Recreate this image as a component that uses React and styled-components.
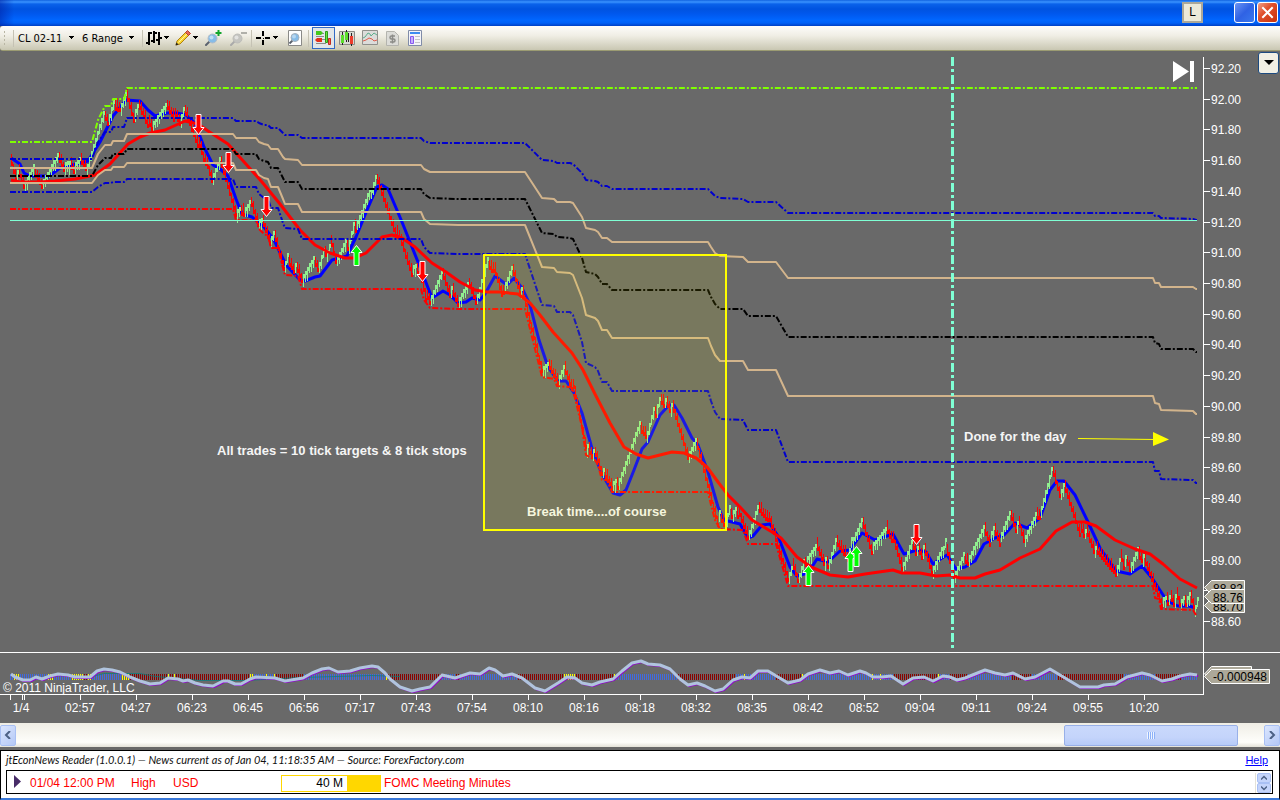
import styled, { createGlobalStyle } from "styled-components";

const GlobalStyle = createGlobalStyle`
  * {
    box-sizing: border-box;
  }

  body {
    margin: 0;
    background: #696969;
    font-family: "Liberation Sans", Arial, sans-serif;
    font-size: 12px;
  }

  button,
  input,
  select {
    margin: 0;
    padding: 0;
    border: 0;
    font-family: inherit;
    font-size: inherit;
    color: inherit;
  }
`;

/* ---------- chart data ---------- */

const BAR_STEP = 2;
const HALF_BAR = 5;

// swing highs and lows of the price, alternating, starting with a high
const swings = [
  [11, 156], [15, 182], [19, 168], [24, 192], [33, 164], [42, 191], [58, 151],
  [63, 172], [71, 160], [73, 174], [81, 155], [87, 174], [104, 108], [108, 128],
  [113, 100], [121, 113], [126, 89], [133, 123], [139, 100], [147, 128],
  [149, 117], [152, 133], [167, 100], [173, 122], [175, 108], [180, 128],
  [184, 103], [197, 148], [199, 138], [204, 165], [206, 156], [212, 186],
  [220, 154], [236, 220], [240, 206], [245, 217], [251, 197], [258, 230],
  [263, 217], [270, 248], [274, 228], [284, 275], [287, 253], [294, 276],
  [296, 260], [302, 286], [314, 254], [318, 275], [324, 245], [327, 260],
  [331, 237], [336, 268], [346, 237], [348, 255], [353, 222], [356, 233],
  [369, 188], [371, 199], [376, 171], [395, 238], [399, 230], [411, 277],
  [416, 263], [417, 275], [419, 263], [425, 302], [427, 290], [430, 307],
  [442, 267], [449, 298], [452, 285], [458, 309], [469, 278], [476, 308],
  [487, 257], [491, 273], [494, 263], [501, 297], [502, 285], [504, 295],
  [512, 263], [520, 298], [522, 285], [542, 377], [549, 360], [558, 387],
  [564, 362], [571, 391], [573, 379], [586, 454], [588, 443], [592, 460],
  [595, 447], [602, 479], [604, 467], [612, 492], [616, 478], [618, 491],
  [639, 421], [647, 441], [653, 407], [656, 418], [660, 393], [664, 410],
  [666, 395], [670, 415], [672, 400], [688, 463], [696, 436], [717, 527],
  [719, 510], [725, 530], [729, 505], [732, 521], [735, 507], [737, 519],
  [739, 507], [748, 543], [758, 502], [765, 521], [769, 512], [788, 585],
  [793, 560], [798, 586], [804, 555], [806, 568], [817, 541], [824, 568],
  [826, 555], [828, 572], [836, 535], [848, 563], [851, 537], [853, 547],
  [862, 516], [871, 555], [887, 524], [891, 543], [893, 533], [902, 575],
  [912, 537], [916, 559], [918, 543], [921, 560], [924, 543], [932, 578],
  [941, 547], [943, 556], [945, 538], [954, 583], [963, 552], [968, 567],
  [984, 523], [989, 547], [994, 523], [999, 547], [1010, 508], [1015, 533],
  [1019, 518], [1024, 547], [1036, 510], [1040, 520], [1052, 463], [1060, 502],
  [1064, 480], [1079, 537], [1081, 523], [1084, 540], [1087, 527], [1094, 557],
  [1097, 545], [1116, 578], [1121, 552], [1123, 570], [1126, 553], [1130, 575],
  [1137, 547], [1142, 565], [1144, 553], [1161, 608], [1166, 595], [1168, 607],
  [1171, 592], [1173, 607], [1177, 590], [1180, 610], [1184, 595], [1186, 608],
  [1190, 590], [1195, 615], [1197, 597],
];

const fastAverage = [
  [11, 158], [20, 164], [24, 173], [30, 176], [44, 176], [48, 177], [60, 168],
  [88, 161], [100, 142], [113, 116], [126, 100], [140, 101], [148, 110],
  [155, 116], [167, 113], [177, 113], [186, 115], [195, 123], [204, 147],
  [213, 165], [220, 169], [228, 176], [236, 199], [242, 214], [252, 217],
  [264, 227], [274, 240], [286, 265], [300, 280], [305, 281], [315, 277],
  [320, 276], [332, 260], [347, 256], [356, 237], [367, 210], [377, 187],
  [382, 185], [388, 189], [402, 222], [420, 267], [432, 298], [443, 291],
  [450, 295], [458, 303], [466, 302], [472, 298], [480, 300], [485, 294],
  [495, 276], [507, 285], [514, 278], [522, 288], [530, 305], [539, 340],
  [548, 367], [558, 381], [566, 381], [574, 393], [582, 413], [593, 452],
  [602, 474], [613, 493], [620, 495], [626, 490], [634, 470], [642, 449],
  [648, 442], [660, 415], [669, 405], [674, 405], [682, 418], [692, 438],
  [698, 445], [708, 472], [718, 507], [724, 520], [740, 524], [748, 538],
  [753, 536], [762, 525], [770, 524], [778, 536], [790, 567], [797, 576],
  [808, 573], [817, 559], [828, 562], [840, 551], [850, 550], [862, 533],
  [875, 540], [893, 534], [904, 554], [917, 550], [926, 552], [933, 564],
  [942, 558], [947, 555], [956, 569], [965, 567], [975, 561], [984, 544],
  [995, 538], [1004, 535], [1015, 523], [1027, 528], [1040, 518], [1050, 490],
  [1057, 481], [1064, 481], [1075, 495], [1088, 522], [1100, 548], [1116, 571],
  [1130, 574], [1142, 566], [1152, 578], [1167, 601], [1178, 606], [1189, 606],
  [1196, 608],
];

const slowAverage = [
  [11, 180], [20, 182], [40, 182], [55, 181], [75, 179], [95, 175], [110, 164],
  [128, 144], [140, 137], [150, 133], [165, 130], [185, 121], [198, 124],
  [208, 131], [228, 144], [245, 163], [262, 182], [280, 204], [300, 230],
  [315, 245], [330, 253], [345, 258], [355, 258], [366, 253], [382, 237],
  [392, 235], [402, 238], [415, 247], [432, 263], [446, 272], [460, 282],
  [475, 290], [487, 292], [500, 292], [518, 294], [530, 303], [540, 315],
  [553, 332], [572, 353], [583, 370], [596, 396], [610, 423], [624, 447],
  [636, 454], [648, 458], [660, 455], [672, 452], [684, 453], [696, 458],
  [707, 467], [718, 482], [728, 495], [740, 507], [752, 520], [772, 532],
  [781, 538], [797, 557], [811, 567], [830, 575], [848, 577], [865, 574],
  [893, 570], [902, 573], [920, 573], [936, 576], [950, 575], [960, 578],
  [975, 578], [985, 574], [1000, 570], [1020, 558], [1040, 549], [1056, 531],
  [1072, 522], [1085, 522], [1096, 526], [1115, 540], [1135, 549],
  [1150, 554], [1163, 564], [1180, 579], [1197, 588],
];

const dayHigh = [
  [10, 142], [92, 142], [98, 120], [105, 106], [111, 106], [113, 99],
  [124, 99], [127, 88], [1197, 88],
];

const dayLow = [
  [10, 209], [233, 209], [236, 220], [256, 220], [259, 229], [264, 234],
  [268, 236], [271, 248], [278, 248], [283, 268], [285, 275], [298, 276],
  [302, 289], [421, 289], [424, 300], [430, 308], [458, 309], [525, 309],
  [542, 377], [554, 379], [557, 386], [570, 387], [573, 390], [582, 427],
  [586, 455], [595, 460], [598, 465], [602, 480], [607, 480], [612, 492],
  [708, 492], [711, 505], [715, 520], [720, 529], [743, 530], [748, 544],
  [776, 544], [788, 586], [1153, 586], [1155, 598], [1159, 599], [1161, 609],
  [1193, 610], [1196, 615],
];

const oscillator = [
  [11, 674], [15, 677], [23, 680], [30, 680], [36, 677], [42, 679], [50, 676],
  [58, 674], [68, 675], [75, 677], [90, 677], [97, 671], [104, 669],
  [112, 670], [120, 672], [130, 677], [140, 681], [150, 684], [160, 683],
  [168, 678], [178, 679], [183, 681], [188, 680], [195, 683], [203, 685],
  [213, 686], [223, 681], [228, 681], [235, 684], [241, 684], [250, 679],
  [256, 677], [275, 678], [285, 681], [303, 678], [312, 673], [322, 669],
  [329, 668], [338, 672], [350, 671], [360, 668], [372, 666], [378, 667],
  [385, 673], [390, 679], [400, 687], [412, 691], [420, 689], [430, 687],
  [442, 675], [455, 678], [470, 673], [480, 674], [489, 668], [495, 670],
  [503, 676], [512, 674], [522, 678], [535, 688], [545, 691], [558, 683],
  [567, 677], [575, 678], [582, 683], [592, 685], [600, 682], [613, 679],
  [622, 671], [632, 663], [641, 661], [648, 664], [660, 665], [670, 669],
  [680, 679], [688, 685], [697, 683], [705, 686], [715, 691], [723, 689],
  [733, 680], [742, 677], [750, 678], [758, 671], [768, 671], [778, 677],
  [788, 683], [800, 680], [808, 674], [820, 670], [830, 673], [839, 671],
  [848, 675], [860, 671], [866, 673], [873, 677], [882, 677], [891, 676],
  [897, 680], [903, 684], [913, 678], [924, 677], [933, 681], [943, 676],
  [950, 677], [957, 680], [965, 678], [975, 674], [985, 670], [995, 673],
  [1005, 675], [1013, 673], [1025, 679], [1035, 677], [1050, 669],
  [1060, 675], [1080, 687], [1098, 687], [1104, 685], [1115, 684],
  [1127, 677], [1142, 673], [1150, 675], [1162, 681], [1172, 679],
  [1180, 676], [1190, 674], [1197, 675],
];

// each entry: x where the histogram changes to that colour
const histogram = [
  [10, "b"], [13, "y"], [20, "b"], [48, "y"], [54, "b"], [71, "y"], [84, "r"],
  [88, "y"], [92, "b"], [121, "y"], [130, "r"], [167, "y"], [170, "r"],
  [173, "y"], [176, "r"], [249, "y"], [253, "b"], [265, "y"], [267, "b"],
  [274, "y"], [276, "r"], [304, "b"], [386, "y"], [388, "r"], [441, "b"],
  [455, "r"], [460, "b"], [518, "r"], [563, "y"], [576, "r"], [614, "y"],
  [616, "b"], [678, "r"], [735, "b"], [743, "y"], [746, "b"], [775, "r"],
  [802, "y"], [804, "b"], [872, "y"], [874, "b"], [880, "y"], [882, "b"],
  [893, "r"], [938, "y"], [940, "b"], [950, "r"], [968, "b"], [1012, "r"],
  [1032, "b"], [1058, "r"], [1123, "b"], [1155, "r"], [1182, "b"], [1198, ""],
];

const histogramColors = { b: "#4169e1", y: "#ffff00", r: "#8b0000" };

const timeLabels = [
  "02:57", "04:27", "06:23", "06:45", "06:56", "07:17", "07:43", "07:54",
  "08:10", "08:16", "08:18", "08:32", "08:35", "08:42", "08:52", "09:04",
  "09:11", "09:24", "09:55", "10:20",
];

const priceLabels = Array.from({ length: 19 }, (_, i) => ({
  text: (92.2 - i * 0.2).toFixed(2),
  y: Math.round(69 + i * 30.72),
}));

const sells = [[198, 114], [228, 152], [266, 196], [422, 261], [916, 524]];
const buys = [[356, 245], [808, 565], [850, 551], [856, 546]];

/* ---------- chart helpers ---------- */

const toPoints = (list) => list.map((p) => p.join(",")).join(" ");

const valueAt = (list, x) => {
  if (x <= list[0][0]) return list[0][1];
  for (let i = 1; i < list.length; i++) {
    const [x1, y1] = list[i];
    if (x <= x1) {
      const [x0, y0] = list[i - 1];
      return y0 + ((y1 - y0) * (x - x0)) / (x1 - x0);
    }
  }
  return list[list.length - 1][1];
};

const levelXs = [...new Set([...dayHigh, ...dayLow].map((p) => p[0]))].sort(
  (a, b) => a - b
);

const getLevel = (ratio) =>
  levelXs.map((x) => {
    const high = valueAt(dayHigh, x);
    const low = valueAt(dayLow, x);
    return [x, Math.round(high + (low - high) * ratio)];
  });

const getBars = () => {
  const centers = swings.map(([x, y], i) => [
    x,
    i % 2 === 0 ? y + HALF_BAR : y - HALF_BAR,
  ]);
  const wicks = [2, 0, 3, 1, 4, 0, 2];
  const paths = { up: "", down: "" };
  for (let x = 11, i = 0; x <= 1197; x += BAR_STEP, i++) {
    const y = Math.round(valueAt(centers, x));
    const rising = valueAt(centers, x + 1) < valueAt(centers, x - 1);
    const top = y - HALF_BAR - (rising ? 0 : wicks[i % 7]);
    const bottom = y + HALF_BAR + (rising ? wicks[(i + 3) % 7] : 0);
    const close = rising ? y - HALF_BAR : y + HALF_BAR - 4;
    // the close tick is tall enough to join the bar to the next one
    const bar = `M${x} ${top}h1V${bottom}h-1zM${x + 1} ${close}h1v4h-1z`;
    if (rising) paths.up += bar;
    else paths.down += bar;
  }
  return paths;
};

const getHistogram = (color) => {
  let d = "";
  histogram.forEach(([from, key], i) => {
    if (key !== color) return;
    const to = histogram[i + 1][0];
    for (let x = from + (from % 2); x < to; x += 2) d += `M${x} 674h1v6h-1z`;
  });
  return d;
};

const bars = getBars();

/* ---------- title bar ---------- */

const StyledWindow = styled.div`
  display: flex;
  flex-direction: column;
  min-height: 100vh;
  background: #696969;
`;

const StyledTitleBar = styled.header`
  display: flex;
  align-items: flex-start;
  justify-content: flex-end;
  height: 26px;
  padding: 2px 2px 0 0;
  background:
    linear-gradient(90deg, rgba(0, 30, 160, 0.5), transparent 14px),
    linear-gradient(
      #1163e0 0,
      #3a93ff 2px,
      #0a62ea 4px,
      #0053e0 9px,
      #0058ee 14px,
      #0066ff 20px,
      #0060f6 23px,
      #003fc4 26px
    );
`;

const StyledLinkButton = styled.button`
  width: 21px;
  height: 21px;
  margin-right: 29px;
  border: 2px solid #aca899;
  background: #ece9d8;
  font-size: 12px;
  line-height: 17px;
  color: #000000;
`;

const StyledWindowButton = styled.button`
  display: flex;
  align-items: center;
  justify-content: center;
  width: 21px;
  height: 21px;
  margin-left: 2px;
  border: 1px solid #ffffff;
  border-radius: 3px;
  background: ${({ $close }) =>
    $close
      ? "linear-gradient(135deg, #f0a088, #e0502c 40%, #c8320c)"
      : "linear-gradient(135deg, #6a94f4, #2f62e4 50%, #3a78ee)"};
`;

/* ---------- toolbar ---------- */

const StyledToolbar = styled.div`
  display: flex;
  align-items: center;
  height: 25px;
  border-bottom: 1px solid #9b9b72;
  border-radius: 3px 0 0 3px;
  background: linear-gradient(#fdfcfa, #f0eee5 40%, #c9c7b2);
  font-family: "DejaVu Sans Condensed", "DejaVu Sans", sans-serif;
  font-size: 11px;
  color: #000000;
`;

const StyledGrip = styled.div`
  flex: 0 0 10px;
  height: 17px;
  margin-left: 3px;
  background: radial-gradient(#b9b6a4 1px, transparent 1px) 0 0 / 3px 4px
    repeat-y;
`;

const StyledSeparator = styled.div`
  flex: 0 0 1px;
  height: 17px;
  background: #c5c2b4;
`;

const StyledPicker = styled.label`
  display: flex;
  align-items: center;
  width: 64px;
  padding-left: 4px;
`;

const StyledSelect = styled.select`
  width: ${({ $width }) => $width}px;
  appearance: none;
  background: transparent;
`;

const StyledTools = styled.div`
  display: flex;
  margin-left: 3px;
`;

const StyledTool = styled.button`
  display: flex;
  align-items: center;
  justify-content: center;
  gap: 2px;
  width: ${({ $width }) => $width || 23}px;
  height: 22px;
  border: 1px solid ${({ $active }) => ($active ? "#316ac5" : "transparent")};
  background: ${({ $active }) => ($active ? "#e1e6e8" : "transparent")};
`;

const Caret = () => (
  <svg width="6" height="4" viewBox="0 0 6 4" shapeRendering="crispEdges">
    <path d="M0 0h5v1H4v1H3v1H2V2H1V1H0z" fill="#000" />
  </svg>
);

const BarsIcon = () => (
  <svg width="16" height="16" viewBox="0 0 16 16" shapeRendering="crispEdges">
    <path
      d="M2 2h2v13H2zM0 12h2v2H0zM4 2h2v2H4zM7 1h2v12H7zM9 2h2v2H9zM5 10h2v2H5zM12 2h2v13h-2zM14 7h2v2h-2zM10 9h2v2h-2z"
      fill="#000"
    />
  </svg>
);

const PencilIcon = () => (
  <svg width="16" height="16" viewBox="0 0 16 16">
    <path d="M1 15l1-4 9-9 3 3-9 9z" fill="#f8d430" stroke="#b08010" />
    <path d="M3.5 12.5l9-9" stroke="#fff3a0" />
    <path d="M10.5 2.5L12.5.5l3 3-2 2z" fill="#e46858" stroke="#b43c30" />
    <path d="M.5 15.5l1-3 2 2z" fill="#222" />
  </svg>
);

const LensIcon = ({ sign, muted }) => (
  <svg width="17" height="16" viewBox="0 0 17 16">
    <path
      d="M1 15l4-4"
      stroke={muted ? "#aaa" : "#5b626e"}
      strokeWidth="2"
      strokeLinecap="round"
    />
    <circle
      cx="7.5"
      cy="8.5"
      r="4.5"
      fill={muted ? "#c4c4c0" : "#86bce8"}
      stroke={muted ? "#bcbcb8" : "#b4bcc6"}
    />
    <circle cx="6.5" cy="7.5" r="2" fill="#fff" opacity="0.5" />
    {sign === "+" && (
      <path d="M13.5 0v6M10.5 3h6" stroke="#12a52c" strokeWidth="2" />
    )}
    {sign === "-" && <path d="M11 3h6" stroke="#b0b0aa" strokeWidth="2" />}
  </svg>
);

const CrossIcon = () => (
  <svg width="15" height="15" viewBox="0 0 15 15" shapeRendering="crispEdges">
    <path
      d="M6 0h2v5H6zM6 9h2v5H6zM0 6h5v2H0zM9 6h5v2H9zM7 7h1v1H7z"
      fill="#000"
    />
  </svg>
);

const PageLensIcon = () => (
  <svg width="16" height="16" viewBox="0 0 16 16">
    <path d="M1.5.5h13v15h-13z" fill="#fff" stroke="#8a8a88" />
    <path d="M2.5 13.5l3-3" stroke="#5b626e" strokeWidth="2" />
    <circle cx="8" cy="7.5" r="4" fill="#86bce8" stroke="#a7b0bb" />
    <circle cx="7" cy="6.5" r="2" fill="#fff" opacity="0.4" />
  </svg>
);

const TraderIcon = () => (
  <svg width="17" height="16" viewBox="0 0 17 16">
    <path d="M6 3.5h3M1 6.5h8M6 9.5h4M1 13.5h10" stroke="#8a8a8a" />
    <path d="M1 1h5l2 2-2 2H1z" fill="#46c81e" />
    <path d="M2 8h5v4H2l-2-2z" fill="#e4301c" />
    <path d="M10.5 1.5h2v11h-2z" fill="#6ae040" stroke="#2c9a18" />
    <path d="M13.5 8.5h2v6h-2z" fill="#f46454" stroke="#c02c20" />
  </svg>
);

const CandlesIcon = () => (
  <svg width="16" height="16" viewBox="0 0 16 16">
    <path d="M.5 1.5h15v13H.5z" fill="#d8d8d2" stroke="#8a8a86" />
    <path d="M3.5 2v13M7.5 0v12M12.5 3v13" stroke="#222" />
    <path d="M2 5h3v8H2zM6 2h3v8H6z" fill="#5cdc2c" />
    <path d="M11 6h3v8h-3z" fill="#ee3c2c" />
    <path d="M9.5 3v9" stroke="#222" />
  </svg>
);

const LinesIcon = () => (
  <svg width="16" height="16" viewBox="0 0 16 16">
    <path d="M.5.5h15v14H.5z" fill="#dcdcda" stroke="#90908c" />
    <path d="M1 8l2-1 3-4 2 1 1 2 3-3 3 2" fill="none" stroke="#5dae8c" />
    <path d="M1 11l3-1 3-2 3 1 2 2 3-1" fill="none" stroke="#e05c4c" />
  </svg>
);

const DollarIcon = () => (
  <svg width="13" height="15" viewBox="0 0 13 15">
    <path d="M.5.5h8l4 4v10H.5z" fill="#dcdcd8" stroke="#b4b4ae" />
    <path
      d="M9 5H5.5a1.5 1.5 0 000 3h2a1.5 1.5 0 010 3H4M6.5 3.5v9"
      fill="none"
      stroke="#8c8c88"
      strokeWidth="1.5"
    />
  </svg>
);

const PanelIcon = () => (
  <svg width="15" height="16" viewBox="0 0 15 16">
    <path d="M.5.5h13v15H.5z" fill="#f4f4f8" stroke="#808ca8" />
    <path d="M2 2h10v2H2z" fill="#3c8cf0" />
    <path d="M2.5 6.5h3v7h-3z" fill="#c4b0fc" stroke="#8858f0" />
    <path d="M7 6.5h5M7 9.5h5M7 12.5h5" stroke="#c4c4c8" />
  </svg>
);

/* ---------- chart ---------- */

const StyledChartArea = styled.main`
  position: relative;
`;

const StyledChart = styled.svg`
  display: block;
  width: 100%;
  font-family: "Liberation Sans", Arial, sans-serif;
  font-size: 12px;
  fill: #ffffff;
`;

const StyledCurve = styled.polyline`
  fill: none;
  stroke: ${({ $color }) => $color};
  stroke-width: ${({ $width }) => $width};
  stroke-dasharray: ${({ $dashed }) => ($dashed ? "6 2 2 2" : "none")};
  stroke-linejoin: round;
`;

const StyledNote = styled.text`
  font-size: 13px;
  font-weight: 700;
  fill: #f5f5f5;
`;

const StyledTag = styled.polygon`
  fill: #aca899;
  stroke: #ffffff;
`;

const StyledTagText = styled.text`
  fill: #000000;
`;

const StyledMenuButton = styled.button`
  position: absolute;
  top: 1px;
  right: 1px;
  display: flex;
  justify-content: center;
  width: 21px;
  height: 22px;
  padding-top: 7px;
  border: 1px solid #1c4a80;
  border-radius: 3px;
  background: #f1efe4;
`;

const ARROW = "M-2.5 20.5v-13h-3L0 .5l5.5 7h-3v13z";

const Curve = ({ data, color, width, dashed }) => (
  <StyledCurve
    points={toPoints(data)}
    $color={color}
    $width={width}
    $dashed={dashed}
  />
);

const PriceTag = ({ y, text }) => (
  <>
    <StyledTag
      points={`1204.5,${y} 1211.5,${y - 7} 1244.5,${y - 7} 1244.5,${y + 7} 1211.5,${
        y + 7
      }`}
    />
    <StyledTagText x="1213" y={y + 5}>
      {text}
    </StyledTagText>
  </>
);

const Chart = () => (
  <StyledChart viewBox="0 51 1280 672" role="img" aria-label="CL 02-11 chart">
    <Curve data={fastAverage} color="#0000ff" width={3} />
    <g shapeRendering="crispEdges">
      <path d={bars.down} fill="#ff0000" />
      <path d={bars.up} fill="#90ee90" />
    </g>
    <Curve data={dayLow} color="#ff0000" width={2} dashed />
    <Curve data={slowAverage} color="#ff0000" width={3} />

    <Curve data={dayHigh} color="#7fff00" width={2} dashed />
    <Curve data={getLevel(0.25)} color="#0000cd" width={2} dashed />
    <Curve data={getLevel(0.382)} color="#d2b48c" width={2} />
    <Curve data={getLevel(0.5)} color="#000000" width={2} dashed />
    <Curve data={getLevel(0.618)} color="#d2b48c" width={2} />
    <Curve data={getLevel(0.75)} color="#0000cd" width={2} dashed />

    <path d="M10 220.5H1197" stroke="#7fffd4" />
    <path
      d="M952.5 57V648"
      stroke="#7fffd4"
      strokeWidth="3"
      strokeDasharray="9 3 3 3"
    />

    {sells.map(([x, y]) => (
      <path
        key={x}
        d={ARROW}
        transform={`translate(${x + 0.5} ${y + 21}) scale(1 -1)`}
        fill="#ff0000"
        stroke="#ffffff"
      />
    ))}
    {buys.map(([x, y]) => (
      <path
        key={x}
        d={ARROW}
        transform={`translate(${x + 0.5} ${y})`}
        fill="#00ff00"
        stroke="#ffffff"
      />
    ))}

    <StyledNote x="217" y="455">
      All trades = 10 tick targets &amp; 8 tick stops
    </StyledNote>
    <StyledNote x="527" y="516">
      Break time....of course
    </StyledNote>
    <StyledNote x="964" y="441">
      Done for the day
    </StyledNote>
    <path d="M1078 438.5L1155 439.5" stroke="#ffff00" />
    <path d="M1153 432L1169 439.5L1153 446z" fill="#ffff00" />
    <rect
      x="484"
      y="255"
      width="242"
      height="275"
      fill="#ffff00"
      fillOpacity="0.1"
      stroke="#ffff00"
      strokeWidth="2"
    />
    <path d="M1173 61L1189 71.5L1173 82zM1190 61h4v21h-4z" />

    {/* oscillator */}
    {Object.entries(histogramColors).map(([key, color]) => (
      <path
        key={key}
        d={getHistogram(key)}
        fill={color}
        shapeRendering="crispEdges"
      />
    ))}
    <path
      d="M92 676.5L104 673.5H140L156 676.5L200 680.5H245L300 677.5L372 675.5L400 676.5"
      fill="none"
      stroke="#008080"
      opacity="0.7"
    />
    <g transform="translate(1 1)">
      <Curve data={oscillator} color="#9400d3" width={2} />
    </g>
    <Curve data={oscillator} color="#b0c4de" width={3} />
    <text x="3" y="692">
      © 2011 NinjaTrader, LLC
    </text>

    {/* axes */}
    <path
      d="M0 652.5H1280M0 694.5H1203.5M1203.5 57V695"
      stroke="#ffffff"
    />
    <path d="M10.5 695V700M22.5 695V700M24.5 695V700" stroke="#ffffff" />
    <text x="21" y="712" textAnchor="middle">
      1/4
    </text>
    {timeLabels.map((label, i) => (
      <g key={label}>
        <path d={`M${80.5 + i * 56} 695V700`} stroke="#ffffff" />
        <text x={80 + i * 56} y="712" textAnchor="middle">
          {label}
        </text>
      </g>
    ))}
    {priceLabels.map(({ text, y }) => (
      <g key={text}>
        <path d={`M1204 ${y - 0.5}H1210`} stroke="#ffffff" />
        {text !== "88.80" && (
          <text x="1211" y={y + 4}>
            {text}
          </text>
        )}
      </g>
    ))}

    <PriceTag y={587.5} text="88.82" />
    <PriceTag y={605.5} text="88.70" />
    <PriceTag y={596.5} text="88.76" />
    <StyledTag points="1204.5,674 1211.5,666.5 1251.5,666.5 1251.5,680 1211.5,680" />
    <StyledTag points="1204.5,676.5 1211.5,669.5 1269.5,669.5 1269.5,683.5 1211.5,683.5" />
    <StyledTagText x="1213" y="681">
      -0.000948
    </StyledTagText>
  </StyledChart>
);

/* ---------- scroll bar ---------- */

const StyledScrollBar = styled.div`
  display: flex;
  align-items: center;
  height: 24px;
  background: linear-gradient(#efede5, #fefefb 80%, #e4e2d8);
`;

const StyledScrollButton = styled.button`
  display: flex;
  align-items: center;
  justify-content: center;
  flex: 0 0 16px;
  height: 21px;
  border: 1px solid #a9c0f4;
  border-radius: 2px;
  background: linear-gradient(135deg, #dbe6fe, #b4c8f6);
`;

const StyledTrack = styled.div`
  display: flex;
  flex: 1;
  justify-content: flex-end;
  padding-right: 26px;
`;

const StyledThumb = styled.div`
  display: flex;
  align-items: center;
  justify-content: center;
  width: 174px;
  height: 21px;
  border: 1px solid #98b0e8;
  border-radius: 2px;
  background: linear-gradient(#cad9fc, #c4d4fb 60%, #b6cbf8);
`;

const StyledThumbGrip = styled.div`
  width: 8px;
  height: 7px;
  background: repeating-linear-gradient(
    90deg,
    #eef4fe 0 1px,
    #8cb0f8 1px 2px
  );
`;

const ArrowIcon = ({ d, width = 8, height = 8 }) => (
  <svg width={width} height={height} viewBox="0 0 8 8">
    <path d={d} fill="none" stroke="#4d6185" strokeWidth="2" />
  </svg>
);

/* ---------- news reader ---------- */

const StyledNews = styled.section`
  flex: 1;
  margin-top: 3px;
  padding: 0 6px 0 5px;
  border: 1px solid #000000;
  border-bottom: 2px solid #3a78d8;
  background: #ffffff;
`;

const StyledNewsHeader = styled.div`
  display: flex;
  align-items: center;
  justify-content: space-between;
  height: 19px;
  padding: 0 5px 2px 0;
`;

const StyledNewsTitle = styled.div`
  font-family: Lato, sans-serif;
  font-size: 11px;
  font-style: italic;
  color: #111111;
`;

const StyledHelp = styled.a`
  font-family: "Liberation Sans", Arial, sans-serif;
  font-size: 11px;
  color: #0000ff;
`;

const StyledNewsRow = styled.div`
  display: flex;
  align-items: center;
  height: 24px;
  padding: 2px 0 0 7px;
  border: 1px solid #000000;
  color: #ff0000;
`;

const StyledCell = styled.div`
  flex: 0 0 ${({ $width }) => $width}px;
`;

const StyledCountdown = styled.div`
  display: flex;
  flex: 0 0 100px;
  height: 17px;
  margin-right: 3px;
  border: 1px solid #ffd700;
  background: #ffd700;
`;

const StyledInput = styled.input`
  width: 65px;
  padding-right: 4px;
  background: #ffffff;
  text-align: right;
  color: #000000;
`;

const StyledSpinner = styled.div`
  display: flex;
  flex-direction: column;
  margin-left: auto;
  padding: 0 1px;
  border-left: 1px solid #e4e2d8;
`;

const StyledSpinnerButton = styled.button`
  display: flex;
  align-items: center;
  justify-content: center;
  width: 14px;
  height: 10px;
  border: 1px solid #a9c0f4;
  border-radius: 2px;
  background: #c4d4fb;
`;

const App = () => {
  return (
    <>
      <GlobalStyle />
      <StyledWindow>
        <StyledTitleBar>
          <StyledLinkButton>L</StyledLinkButton>
          <StyledWindowButton aria-label="Maximize" />
          <StyledWindowButton aria-label="Close" $close>
            <svg width="13" height="13" viewBox="0 0 13 13">
              <path
                d="M2 2l9 9M11 2l-9 9"
                stroke="#fff"
                strokeWidth="2"
                strokeLinecap="square"
              />
            </svg>
          </StyledWindowButton>
        </StyledTitleBar>

        <StyledToolbar>
          <StyledGrip />
          <StyledSeparator />
          <StyledPicker>
            <StyledSelect aria-label="Instrument" $width={51}>
              <option>CL 02-11</option>
            </StyledSelect>
            <Caret />
          </StyledPicker>
          <StyledPicker>
            <StyledSelect aria-label="Interval" $width={47}>
              <option>6 Range</option>
            </StyledSelect>
            <Caret />
          </StyledPicker>
          <StyledSeparator />
          <StyledTool $width={30} aria-label="Chart style">
            <BarsIcon />
            <Caret />
          </StyledTool>
          <StyledTool $width={28} aria-label="Drawing tools">
            <PencilIcon />
            <Caret />
          </StyledTool>
          <StyledTool $width={24} aria-label="Zoom in">
            <LensIcon sign="+" />
          </StyledTool>
          <StyledTool $width={26} aria-label="Zoom out">
            <LensIcon sign="-" muted />
          </StyledTool>
          <StyledSeparator />
          <StyledTool $width={30} aria-label="Crosshair">
            <CrossIcon />
            <Caret />
          </StyledTool>
          <StyledTool $width={26} aria-label="Data box">
            <PageLensIcon />
          </StyledTool>
          <StyledSeparator />
          <StyledTools>
            <StyledTool $active aria-label="Chart trader">
              <TraderIcon />
            </StyledTool>
            <StyledTool aria-label="Data series">
              <CandlesIcon />
            </StyledTool>
            <StyledTool aria-label="Indicators">
              <LinesIcon />
            </StyledTool>
            <StyledTool aria-label="Strategies">
              <DollarIcon />
            </StyledTool>
            <StyledTool aria-label="Properties">
              <PanelIcon />
            </StyledTool>
          </StyledTools>
        </StyledToolbar>

        <StyledChartArea>
          <Chart />
          <StyledMenuButton aria-label="Chart menu">
            <svg width="10" height="5" viewBox="0 0 10 5">
              <path d="M0 0h10L5 5z" fill="#000" />
            </svg>
          </StyledMenuButton>
        </StyledChartArea>

        <StyledScrollBar>
          <StyledScrollButton aria-label="Scroll left">
            <ArrowIcon d="M6 0L2 4l4 4" />
          </StyledScrollButton>
          <StyledTrack>
            <StyledThumb>
              <StyledThumbGrip />
            </StyledThumb>
          </StyledTrack>
          <StyledScrollButton aria-label="Scroll right">
            <ArrowIcon d="M2 0l4 4-4 4" />
          </StyledScrollButton>
        </StyledScrollBar>

        <StyledNews>
          <StyledNewsHeader>
            <StyledNewsTitle>
              jtEconNews Reader (1.0.0.1) — News current as of Jan 04, 11:18:35
              AM — Source: ForexFactory.com
            </StyledNewsTitle>
            <StyledHelp href="#help">Help</StyledHelp>
          </StyledNewsHeader>
          <StyledNewsRow>
            <StyledCell $width={16}>
              <svg width="7" height="13" viewBox="0 0 7 13">
                <path d="M0 0l7 6.5L0 13z" fill="#482c68" />
              </svg>
            </StyledCell>
            <StyledCell $width={101}>01/04 12:00 PM</StyledCell>
            <StyledCell $width={42}>High</StyledCell>
            <StyledCell $width={108}>USD</StyledCell>
            <StyledCountdown>
              <StyledInput aria-label="Time left" defaultValue="40 M" />
            </StyledCountdown>
            <div>FOMC Meeting Minutes</div>
            <StyledSpinner>
              <StyledSpinnerButton aria-label="Previous">
                <ArrowIcon d="M0 6l4-4 4 4" width={6} height={6} />
              </StyledSpinnerButton>
              <StyledSpinnerButton aria-label="Next">
                <ArrowIcon d="M0 2l4 4 4-4" width={6} height={6} />
              </StyledSpinnerButton>
            </StyledSpinner>
          </StyledNewsRow>
        </StyledNews>
      </StyledWindow>
    </>
  );
};

export default App;
